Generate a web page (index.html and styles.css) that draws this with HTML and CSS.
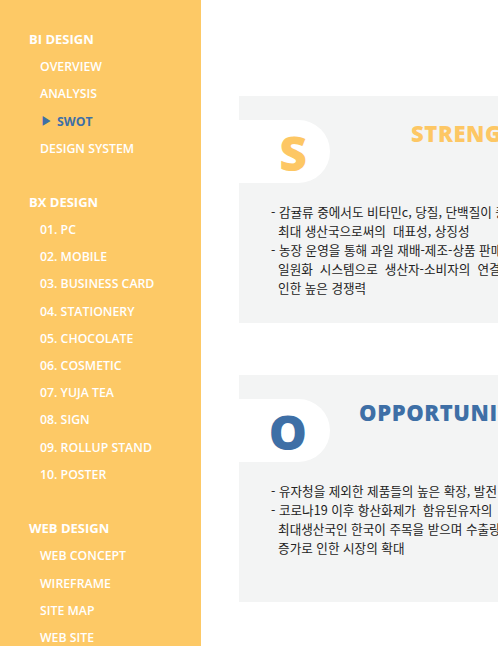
FILE: index.html
```html
<!DOCTYPE html>
<html lang="ko">
<head>
<meta charset="utf-8">
<title>SWOT</title>
<link rel="stylesheet" href="styles.css">
</head>
<body>
<div class="page">
  <nav class="sidebar">
    <div class="group">
      <div class="group-title">BI DESIGN</div>
      <ul class="menu">
        <li>OVERVIEW</li>
        <li>ANALYSIS</li>
        <li class="active"><span class="arrow">&#9654;</span>SWOT</li>
        <li>DESIGN SYSTEM</li>
      </ul>
    </div>
    <div class="group">
      <div class="group-title">BX DESIGN</div>
      <ul class="menu">
        <li>01. PC</li>
        <li>02. MOBILE</li>
        <li>03. BUSINESS CARD</li>
        <li>04. STATIONERY</li>
        <li>05. CHOCOLATE</li>
        <li>06. COSMETIC</li>
        <li>07. YUJA TEA</li>
        <li>08. SIGN</li>
        <li>09. ROLLUP STAND</li>
        <li>10. POSTER</li>
      </ul>
    </div>
    <div class="group">
      <div class="group-title">WEB DESIGN</div>
      <ul class="menu">
        <li>WEB CONCEPT</li>
        <li>WIREFRAME</li>
        <li>SITE MAP</li>
        <li>WEB SITE</li>
      </ul>
    </div>
  </nav>
  <main class="content">
    <section class="card">
      <div class="card-head">
        <div class="tab tab-yellow">S</div>
        <h2 class="card-title title-strength">STRENGTH</h2>
      </div>
      <ul class="points">
        <li>- 감귤류 중에서도 비타민c, 당질, 단백질이 풍부한 유자의<br>&nbsp;&nbsp;최대 생산국으로써의&nbsp; 대표성, 상징성</li>
        <li>- 농장 운영을 통해 과일 재배-제조-상품 판매까지<br>&nbsp;&nbsp;일원화&nbsp; 시스템으로&nbsp; 생산자-소비자의&nbsp; 연결로<br>&nbsp;&nbsp;인한 높은 경쟁력</li>
      </ul>
    </section>
    <section class="card">
      <div class="card-head">
        <div class="tab tab-blue">O</div>
        <h2 class="card-title title-opportunity">OPPORTUNITY</h2>
      </div>
      <ul class="points">
        <li>- 유자청을 제외한 제품들의 높은 확장, 발전 가능성</li>
        <li>- 코로나19 이후 항산화제가&nbsp; 함유된유자의<br>&nbsp;&nbsp;최대생산국인 한국이 주목을 받으며 수출량<br>&nbsp;&nbsp;증가로 인한 시장의 확대</li>
      </ul>
    </section>
  </main>
</div>
</body>
</html>
```

FILE: styles.css
```css
html, body {
  margin: 0;
  padding: 0;
  overflow: hidden;
  background: #ffffff;
}

.page {
  display: flex;
  width: 100vw;
  height: 100vh;
  overflow: hidden;
}

.sidebar {
  flex: 0 0 201px;
  width: 201px;
  height: 100vh;
  background: #fdc966;
  padding-top: 25.8px;
  box-sizing: border-box;
  font-family: "Open Sans", "Noto Sans", sans-serif;
  color: #ffffff;
  overflow: hidden;
}

.group {
  margin-bottom: 27.2px;
}

.group-title {
  padding-left: 29px;
  font-size: 13px;
  font-weight: 700;
  line-height: 27.2px;
  height: 27.2px;
}

.menu {
  list-style: none;
  margin: 0;
  padding: 0 0 0 40px;
}

.menu li {
  font-size: 12.3px;
  font-weight: 600;
  line-height: 27.2px;
  height: 27.2px;
  white-space: nowrap;
}

.menu li.active {
  color: #3e6fa6;
  font-weight: 700;
}

.arrow {
  display: inline-block;
  font-size: 11px;
  margin-left: 1px;
  margin-right: 5px;
  vertical-align: 1px;
}

.content {
  flex: 1 0 auto;
  padding: 96px 0 0 38px;
  display: flex;
  flex-direction: column;
  gap: 52px;
}

.card {
  width: 420px;
  height: 227px;
  background: #f3f4f4;
  padding-top: 24px;
  box-sizing: border-box;
}

.card-head {
  display: flex;
  align-items: flex-start;
}

.tab {
  width: 91px;
  height: 63px;
  flex: 0 0 91px;
  background: #ffffff;
  border-radius: 0 32px 32px 0;
  box-sizing: border-box;
  padding-right: 23px;
  display: flex;
  align-items: center;
  justify-content: flex-end;
  font-family: "Open Sans", "Noto Sans", sans-serif;
  font-weight: 800;
  font-size: 48px;
  line-height: 1;
  padding-top: 3px;
}

.tab-yellow {
  color: #fdc764;
}

.tab-blue {
  color: #3e6fa6;
}

.card-title {
  margin: 0;
  font-family: "Open Sans", "Noto Sans", sans-serif;
  font-weight: 800;
  font-size: 22px;
  letter-spacing: 0.6px;
  line-height: 1;
  padding-top: 2px;
  white-space: nowrap;
}

.title-strength {
  margin-left: 81px;
  color: #fdc764;
}

.title-opportunity {
  margin-left: 29px;
  color: #3e6fa6;
}

.points {
  list-style: none;
  margin: 19px 0 0 32px;
  padding: 0;
  font-family: "Noto Sans CJK KR", "Noto Sans", sans-serif;
  font-size: 12.6px;
  line-height: 19px;
  color: #222222;
  white-space: nowrap;
}
```
